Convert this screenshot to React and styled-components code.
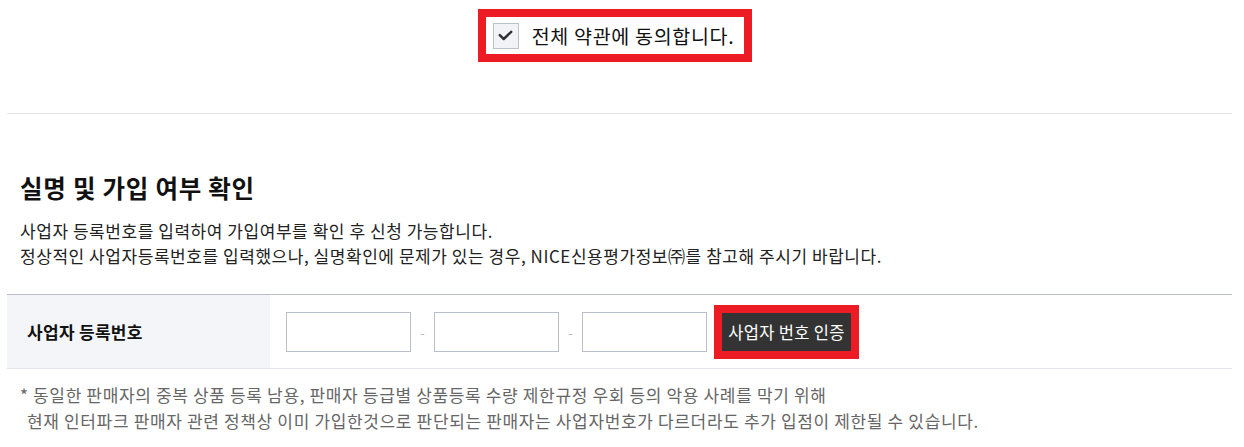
// Import: Dependencies
import React from "react";
import styled, { createGlobalStyle } from "styled-components";

const FONT = `"Noto Sans CJK KR", "Noto Sans", sans-serif`;

// Global
const GlobalStyle = createGlobalStyle`
  html, body {
    margin: 0;
    padding: 0;
    background: #ffffff;
  }
  body {
    font-family: ${FONT};
    color: #222;
  }
  * {
    box-sizing: border-box;
  }
`;

// Check icon
function CheckIcon() {
  return (
    <svg width="15" height="11" viewBox="0 0 15 11" fill="none">
      <path
        d="M1.8 5.2L5.7 9L13.2 1.8"
        stroke="#333"
        strokeWidth="2.5"
        strokeLinecap="round"
        strokeLinejoin="round"
      />
    </svg>
  );
}

// page: Seller check
function App() {
  return (
    <>
      <GlobalStyle />
      <Page>
        <AgreeSection>
          <AgreeBox>
            <CheckBox>
              <CheckIcon />
            </CheckBox>
            <AgreeText>전체 약관에 동의합니다.</AgreeText>
          </AgreeBox>
        </AgreeSection>

        <Section>
          <Title>실명 및 가입 여부 확인</Title>
          <Desc>
            사업자 등록번호를 입력하여 가입여부를 확인 후 신청 가능합니다.
            <br />
            정상적인 사업자등록번호를 입력했으나, 실명확인에 문제가 있는 경우,
            NICE신용평가정보㈜를 참고해 주시기 바랍니다.
          </Desc>

          <FormRow>
            <LabelCell>사업자 등록번호</LabelCell>
            <FieldCell>
              <NumInput type="text" />
              <Dash>-</Dash>
              <NumInput type="text" />
              <Dash>-</Dash>
              <NumInput type="text" />
              <VerifyButton>사업자 번호 인증</VerifyButton>
            </FieldCell>
          </FormRow>

          <Notice>
            <NoticeLine>
              * 동일한 판매자의 중복 상품 등록 남용, 판매자 등급별 상품등록 수량
              제한규정 우회 등의 악용 사례를 막기 위해
            </NoticeLine>
            <NoticeLine $indent>
              현재 인터파크 판매자 관련 정책상 이미 가입한것으로 판단되는
              판매자는 사업자번호가 다르더라도 추가 입점이 제한될 수 있습니다.
            </NoticeLine>
          </Notice>
        </Section>
      </Page>
    </>
  );
}

// Export: App
export default App;

// Styled: Page
const Page = styled.div`
  width: 1244px;
  height: 447px;
  padding: 0 12px 0 7px;
  overflow: hidden;
`;

// Styled: AgreeSection
const AgreeSection = styled.div`
  display: flex;
  justify-content: center;
  padding: 9px 9px 0 0;
  height: 114px;
  border-bottom: 1px solid #e4e5ec;
`;

// Styled: AgreeBox
const AgreeBox = styled.div`
  display: flex;
  align-items: center;
  gap: 13px;
  height: 53px;
  padding: 0 10px 0 7px;
  border: 8px solid #ed1c24;
`;

// Styled: CheckBox
const CheckBox = styled.span`
  display: flex;
  align-items: center;
  justify-content: center;
  width: 26px;
  height: 26px;
  border: 1px solid #bcc1ca;
  background: #f2f3f6;
`;

// Styled: AgreeText
const AgreeText = styled.span`
  font-size: 19.5px;
  letter-spacing: 0.7px;
  color: #111;
  line-height: 1;
`;

// Styled: Section
const Section = styled.div`
  padding-top: 58px;
`;

// Styled: Title
const Title = styled.h2`
  margin: 0 0 0 13px;
  font-size: 24.5px;
  font-weight: 700;
  letter-spacing: 0.75px;
  line-height: 32px;
  color: #111;
`;

// Styled: Desc
const Desc = styled.p`
  margin: 14px 0 0 13px;
  font-size: 17px;
  letter-spacing: 0.55px;
  line-height: 25px;
  color: #222;
`;

// Styled: FormRow
const FormRow = styled.div`
  display: flex;
  margin-top: 26px;
  height: 75px;
  border-top: 1px solid #b8bcc6;
  border-bottom: 1px solid #e1e4ea;
`;

// Styled: LabelCell
const LabelCell = styled.div`
  display: flex;
  align-items: center;
  width: 263px;
  padding-left: 20px;
  background: #f4f5f9;
  font-size: 17px;
  letter-spacing: 0.3px;
  font-weight: 700;
  color: #111;
`;

// Styled: FieldCell
const FieldCell = styled.div`
  display: flex;
  align-items: center;
  padding-left: 16px;
`;

// Styled: NumInput
const NumInput = styled.input`
  width: 125px;
  height: 40px;
  border: 1px solid #b9bec8;
  background: #fff;
  outline: none;
`;

// Styled: Dash
const Dash = styled.span`
  width: 23px;
  text-align: center;
  font-size: 14px;
  color: #c9b9b4;
`;

// Styled: VerifyButton
const VerifyButton = styled.button`
  margin-left: 15px;
  width: 129px;
  height: 38px;
  border: none;
  background: #333333;
  color: #ffffff;
  font-family: ${FONT};
  font-size: 16.5px;
  letter-spacing: 0.3px;
  outline: 8px solid #ed1c24;
  padding: 0;
  cursor: pointer;
`;

// Styled: Notice
const Notice = styled.div`
  padding: 13px 0 0 13px;
`;

// Styled: NoticeLine
const NoticeLine = styled.p`
  margin: 0;
  padding-left: ${(props) => (props.$indent ? "7px" : "0")};
  font-size: 17px;
  letter-spacing: 0.65px;
  line-height: 26px;
  color: #666;
  white-space: nowrap;
`;
